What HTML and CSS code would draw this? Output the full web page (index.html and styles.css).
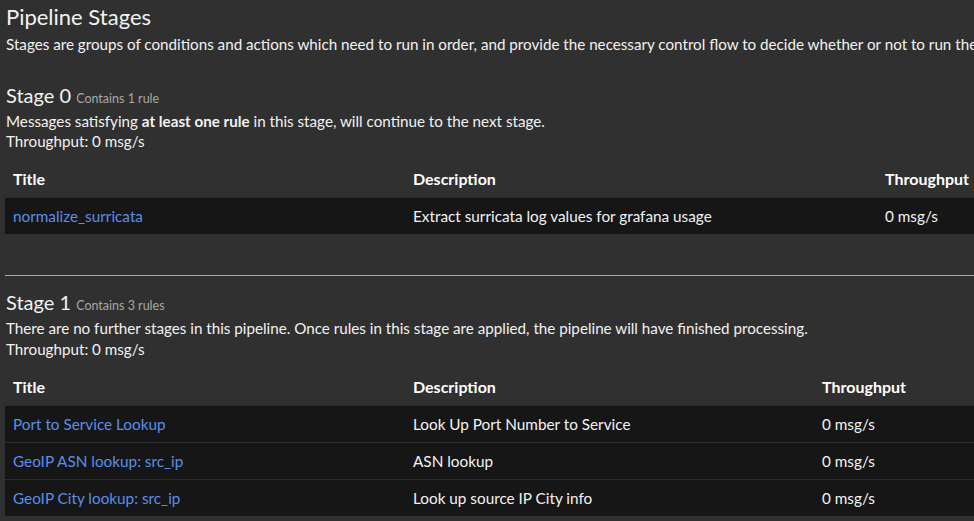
FILE: index.html
```html
<!DOCTYPE html>
<html>
<head>
  <title>Pipeline Stages</title>
  <link rel="stylesheet" href="styles.css">
</head>
<body>
  <div class="page">
    <h1>Pipeline Stages</h1>
    <p class="intro">Stages are groups of conditions and actions which need to run in order, and provide the necessary control flow to decide whether or not to run the rest of a pipeline.</p>

    <div class="stage">
      <h2>Stage 0 <small>Contains 1 rule</small></h2>
      <div class="stage-info">
        <p>Messages satisfying <b>at least one rule</b> in this stage, will continue to the next stage.</p>
        <p>Throughput: 0 msg/s</p>
      </div>
      <table class="rules">
        <colgroup><col class="c-title"><col class="c-desc-wide"><col class="c-tp"></colgroup>
        <thead>
          <tr><th>Title</th><th>Description</th><th>Throughput</th></tr>
        </thead>
        <tbody>
          <tr><td><a href="#">normalize_surricata</a></td><td>Extract surricata log values for grafana usage</td><td>0 msg/s</td></tr>
        </tbody>
      </table>
    </div>

    <hr>

    <div class="stage">
      <h2>Stage 1 <small>Contains 3 rules</small></h2>
      <div class="stage-info">
        <p>There are no further stages in this pipeline. Once rules in this stage are applied, the pipeline will have finished processing.</p>
        <p class="tp-last">Throughput: 0 msg/s</p>
      </div>
      <table class="rules">
        <colgroup><col class="c-title"><col class="c-desc"><col class="c-tp"></colgroup>
        <thead>
          <tr><th>Title</th><th>Description</th><th>Throughput</th></tr>
        </thead>
        <tbody>
          <tr><td><a href="#">Port to Service Lookup</a></td><td>Look Up Port Number to Service</td><td>0 msg/s</td></tr>
          <tr><td><a href="#">GeoIP ASN lookup: src_ip</a></td><td>ASN lookup</td><td>0 msg/s</td></tr>
          <tr><td><a href="#">GeoIP City lookup: src_ip</a></td><td>Look up source IP City info</td><td>0 msg/s</td></tr>
        </tbody>
      </table>
    </div>
  </div>
</body>
</html>
```

FILE: styles.css
```css
html, body {
  margin: 0;
  padding: 0;
  background: #303030;
  overflow: hidden;
}
body {
  font: 15.2px/20px Lato, "Open Sans", sans-serif;
  color: #f2f2f2;
}
.page {
  padding: 4px 0 0 5px;
  width: 1200px;
}
h1 {
  font-size: 22px;
  font-weight: 400;
  line-height: 26px;
  margin: 0 0 0 1px;
}
.intro {
  margin: 4px 0 0 1px;
  white-space: nowrap;
}
p {
  margin: 0;
}
.stage h2 {
  font-size: 20px;
  font-weight: 400;
  line-height: 26px;
  margin: 0 0 0 1px;
}
.stage h2 small {
  font-size: 12.5px;
  line-height: 1;
  color: #a8a8a8;
}
.stage:first-of-type h2 {
  margin-top: 28px;
}
.stage-info {
  margin: 3px 0 0 1px;
}
.stage-info b {
  font-weight: 700;
}
.tp-last {
  margin-top: 1px;
}
.rules {
  border-collapse: collapse;
  table-layout: fixed;
  margin-top: 10px;
}
.c-title { width: 400px; }
.c-desc-wide { width: 472px; }
.c-desc { width: 409px; }
.c-tp { width: 220px; }
.rules th {
  text-align: left;
  font-size: 16px;
  font-weight: 700;
  color: #fff;
  padding: 8px;
  height: 20px;
}
.rules thead tr {
  border-bottom: 1px solid #262626;
}
.rules td {
  background: #161616;
  font-size: 15.3px;
  padding: 8px;
  height: 20px;
  border-top: 1px solid #2c2c2c;
}
.rules a {
  color: #5a8ee8;
  text-decoration: none;
}
hr {
  width: 1100px;
  border: 0;
  border-top: 1px solid #a9a9a9;
  margin: 41px 0 13px;
}
```
